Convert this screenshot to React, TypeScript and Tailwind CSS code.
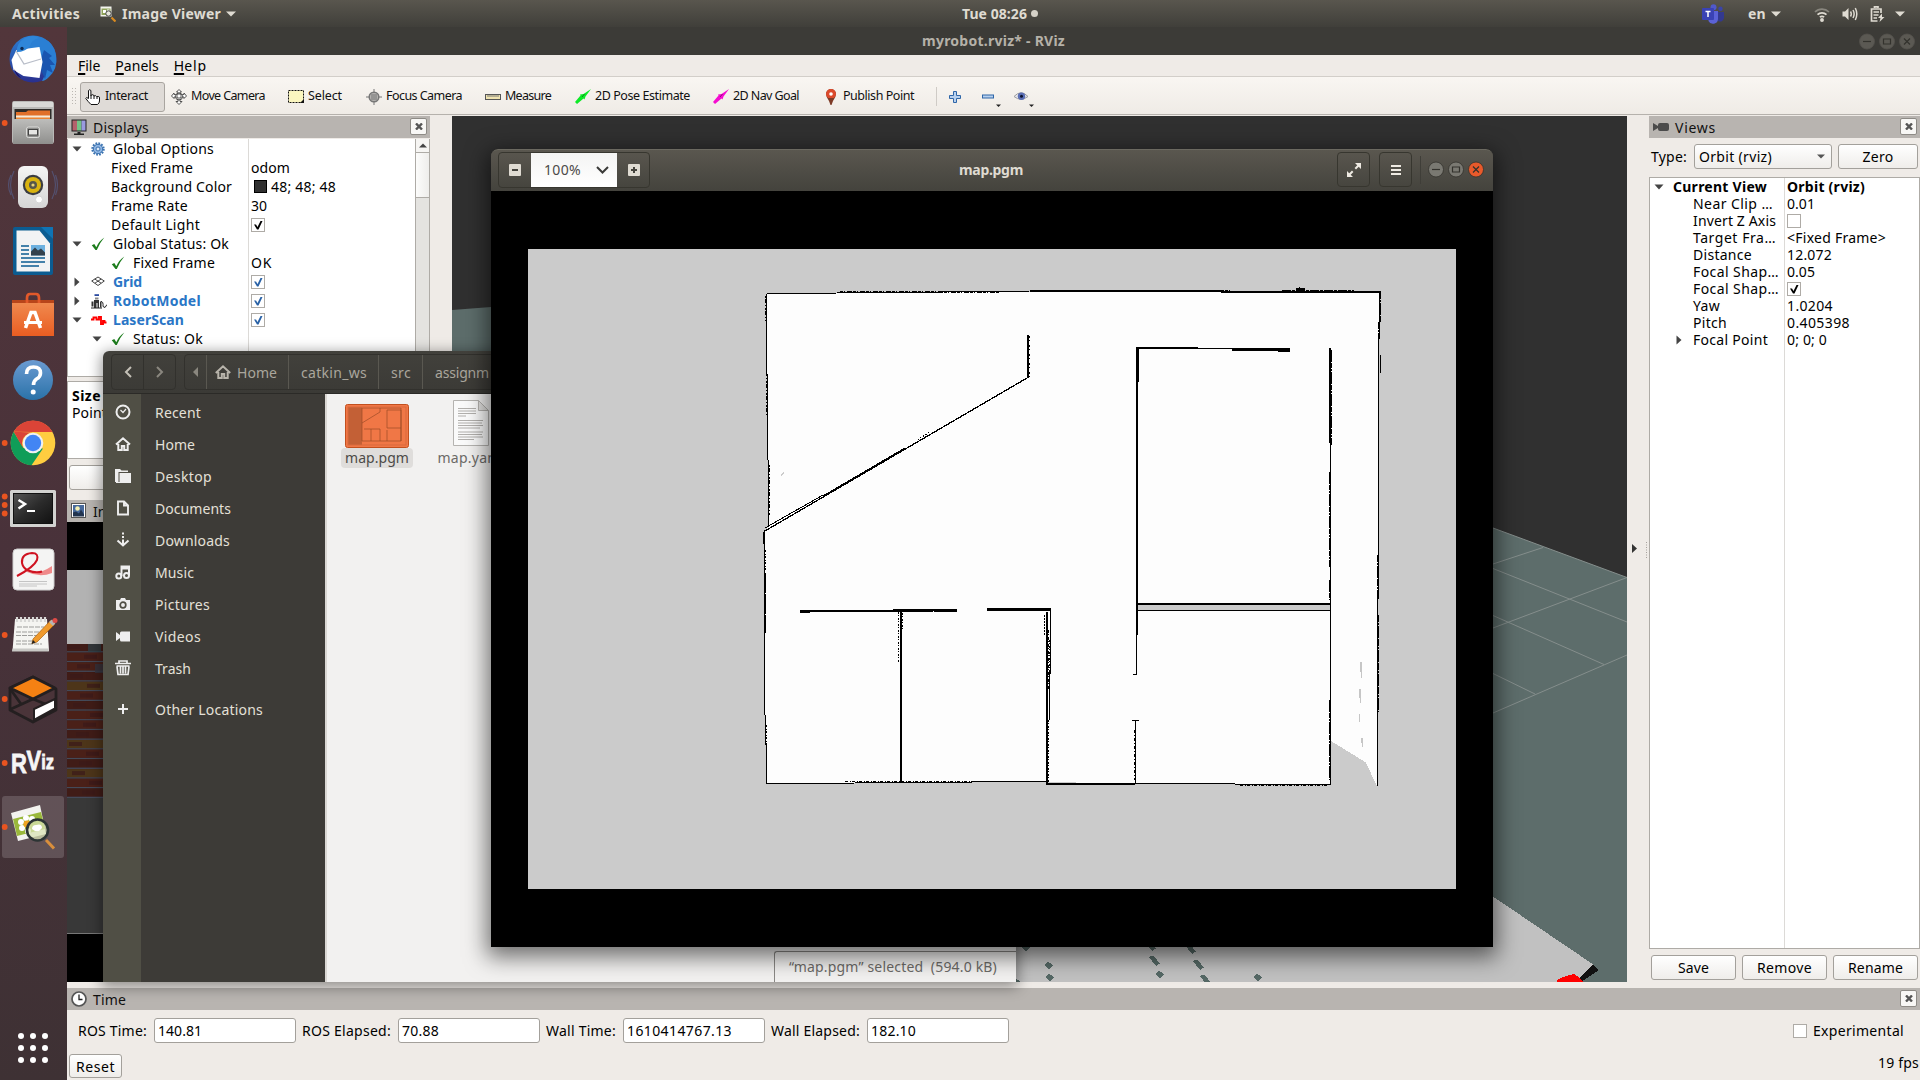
import { useLayoutEffect, useRef, useState, type ReactNode } from "react";

/* Text run whose tracking is tuned so that it spans `w` pixels. */
function T({ children, w, className = "" }: { children: string; w?: number; className?: string }) {
  const ref = useRef<HTMLSpanElement>(null);
  const [spacing, setSpacing] = useState(0);
  useLayoutEffect(() => {
    if (!ref.current || !w) return;
    const natural = ref.current.getBoundingClientRect().width;
    setSpacing((w - natural) / children.length);
  }, []);
  return (
    <span ref={ref} className={`inline-block whitespace-pre ${className}`} style={{ letterSpacing: `${spacing}px` }}>
      {children}
    </span>
  );
}

/* ---------- Top bar ---------- */

function Caret({ className = "" }: { className?: string }) {
  return (
    <svg className={className} width="10" height="6" viewBox="0 0 10 6">
      <path d="M0 0.5h10L5 5.5z" fill="currentColor" />
    </svg>
  );
}

function TopBar() {
  return (
    <header className="flex h-[27px] w-full shrink-0 items-center bg-linear-to-b from-[#59564e] to-[#403f3a] text-[14px] font-bold text-[#dfdbd2]">
      <T w={68} className="ml-3">Activities</T>
      <svg className="ml-5 h-4 w-4" viewBox="0 0 16 16">
        <rect x="0.5" y="0.5" width="11" height="10" fill="#f4f4ee" />
        <rect x="1.5" y="2.5" width="9" height="6.5" fill="#8fa35a" />
        <path d="M3 4h3v3H3zM7 3.5h2.500v2H7z" fill="#fff" />
        <circle cx="8.500" cy="7.500" r="2.700" fill="#e6e6dc" stroke="#444" />
        <path d="M11.500 11.500l4 4" stroke="#d98a1f" strokeWidth="2.200" />
      </svg>
      <T w={99} className="ml-1.5">Image Viewer</T>
      <Caret className="ml-[5px]" />
      <T w={65} className="ml-[726px]">Tue 08:26</T>
      <span className="ml-[4px] h-[7px] w-[7px] rounded-full bg-[#d5d1c8]" />
      <svg className="ml-[664px] h-5 w-[22px]" viewBox="0 0 22 20">
        <circle cx="11.500" cy="3.300" r="3" fill="#5059c9" />
        <circle cx="18.500" cy="4.800" r="2.200" fill="#3b44a8" />
        <path d="M15 8h7v6a4 4 0 0 1-6 3z" fill="#33398f" />
        <path d="M7 7h9v8a5 5 0 0 1-9.500 2z" fill="#5b62d6" />
        <rect x="0" y="4" width="12" height="12" rx="1" fill="#3a42b4" />
        <path d="M3.500 7.500h5M6 7.500v5.500" stroke="#fff" strokeWidth="1.500" />
      </svg>
      <T w={18} className="ml-6">en</T>
      <Caret className="ml-[5px]" />
      <svg className="ml-[33px] h-4 w-4" viewBox="0 0 16 16" fill="none" stroke="#dfdbd2" strokeWidth="1.700">
        <path d="M1 6a10 10 0 0 1 14 0" opacity=".4" />
        <path d="M3.500 8.700a6.500 6.500 0 0 1 9 0" />
        <path d="M5.800 11.200a3.500 3.500 0 0 1 4.400 0" />
        <circle cx="8" cy="14" r="1.100" fill="#dfdbd2" />
      </svg>
      <svg className="ml-3 h-4 w-4" viewBox="0 0 16 16" fill="none" stroke="#dfdbd2" strokeWidth="1.500">
        <path d="M0.500 5.500h2.500l3.500-3.500v12l-3.500-3.500H.5z" fill="#dfdbd2" stroke="none" />
        <path d="M8.500 5.500q1.500 2.500 0 5M11 4q2.300 4 0 8M13.300 2q3 6 0 12" />
      </svg>
      <svg className="ml-3 h-4 w-[15px]" viewBox="0 0 15 16" fill="none" stroke="#dfdbd2" strokeWidth="1.700">
        <path d="M7.500 15H1.500V3h9.500v4M4.500 2V0.800h3.500V2" />
        <path d="M3.500 6h5.500M3.500 9h5M3.500 12h3.500" />
        <path d="M12 7.500l-4 4.500h2.500l-1 4 5-5h-2.500z" fill="#dfdbd2" stroke="none" />
      </svg>
      <Caret className="ml-2.5" />
    </header>
  );
}

/* ---------- Dock ---------- */

const DOCK: { dots: number; art: ReactNode }[] = [
  {
    dots: 0,
    art: (
      <g>
        <circle cx="33" cy="59" r="23.500" fill="url(#tb)" />
        <path d="M22 40q9-7 20-2q12 4 14 17q2 14-7 22q-4 4-7 4q5-8 1-16l-2-10q-8-10-20-6z" fill="#2a7fd4" />
        <path d="M44 50l8 6-3 2 6 7-5 0 3 8-6-3-2 9-6-14z" fill="#1a55b0" />
        <path d="M11.500 60l5-10 23-3 3 15-3 16-16-2-10-6z" fill="#fff" />
        <path d="M16 51l8 13 17-5" fill="none" stroke="#b9bec9" strokeWidth="1.300" />
        <path d="M17 52q-1-9 8-14q8-4 14 0q-8 2-9 8q-5 6-13 6z" fill="#2f86d9" />
        <circle cx="22" cy="48.500" r="1.700" fill="#0f2c55" />
        <path d="M14 69l7 9q-5-2-7-9z" fill="#1d1160" />
      </g>
    ),
  },
  {
    dots: 1,
    art: (
      <g>
        <path d="M14 101h37q3 0 3 3v37q0 3-3 3H15q-3 0-3-3v-37q0-3 2-3z" fill="#b9b9b7" />
        <path d="M13 102h40v5H13z" fill="#d9d9d7" />
        <rect x="14.500" y="109" width="37" height="11" fill="#2e2b28" />
        <path d="M16 112h10l2-1.500h22v9H16z" fill="#e1702a" />
        <path d="M16 115.500h34v4H16z" fill="#f6ead9" />
        <path d="M16 117.500h34v3H16z" fill="#ec8434" />
        <rect x="13" y="119" width="40" height="25" rx="1.500" fill="url(#cab)" />
        <rect x="26.500" y="127" width="13" height="10.500" rx="2" fill="#8f8f8d" stroke="#dcdcda" />
        <rect x="28.500" y="129.500" width="9" height="5.500" fill="#e5e5e3" stroke="#444" />
      </g>
    ),
  },
  {
    dots: 0,
    art: (
      <g>
        <path d="M14 171q-7 14 0 28M11 175q-5 10 0 20M52 171q7 14 0 28M55.500 175q4 10 0 20" fill="none" stroke="#56608a" strokeWidth="1.200" opacity=".65" />
        <rect x="18" y="166" width="30" height="42" rx="6" fill="url(#spk)" />
        <circle cx="33" cy="185" r="10.200" fill="#3b3d42" />
        <circle cx="33" cy="185" r="8" fill="#d9b310" />
        <circle cx="33" cy="185" r="4" fill="#55564a" />
        <circle cx="33" cy="185" r="1.600" fill="#e8d47a" />
        <circle cx="39" cy="199.500" r="3.500" fill="#fff" stroke="#d5d5d5" />
      </g>
    ),
  },
  {
    dots: 0,
    art: (
      <g>
        <path d="M15 227h28l10 12v34q0 2-2 2H15q-2 0-2-2v-44q0-2 2-2z" fill="#0b5c91" />
        <path d="M41 227h12v12z" fill="#0f74b4" />
        <path d="M16.500 230.500h23l10.500 13v28h-33.500z" fill="#f2f3f4" />
        <rect x="31" y="245" width="14" height="10.500" fill="#6db1e0" />
        <path d="M31 255.500v-4l4-4 3 3 3-2 4 4v3z" fill="#33414d" />
        <path d="M21 246h8M21 250h8M21 254h8M21 258h24M21 262h24M21 266h18" stroke="#0b5c91" strokeWidth="1.700" />
      </g>
    ),
  },
  {
    dots: 0,
    art: (
      <g>
        <path d="M12 300h42v4H12z" fill="#b8451a" />
        <path d="M27 306v-8q0-4 3-4h6q3 0 3 4v8" fill="none" stroke="#e2592a" strokeWidth="2.700" />
        <path d="M12 303h42v33H12z" fill="url(#bag)" />
        <path d="M25.500 328L31 312.500h4L40.500 328" fill="none" stroke="#fff" strokeWidth="3.500" />
        <path d="M24 322.500h18" stroke="#fff" strokeWidth="3" />
      </g>
    ),
  },
  {
    dots: 0,
    art: (
      <g>
        <circle cx="33" cy="380" r="20" fill="url(#help)" />
        <path d="M26.500 374q0-7 7-7q7 0 7 6q0 4-4 6q-3 2-3 6" fill="none" stroke="#fff" strokeWidth="3.600" />
        <circle cx="33.200" cy="392" r="2.500" fill="#fff" />
      </g>
    ),
  },
  {
    dots: 1,
    art: (
      <g>
        <circle cx="33" cy="443" r="22.300" fill="#ffcd40" />
        <path d="M13.700 431.800A22.300 22.300 0 0 1 52.500 432H33z" fill="#db4437" />
        <path d="M13.700 431.800A22.300 22.300 0 0 0 31.500 465.300L43 448.500 23.500 448z" fill="#0f9d58" />
        <path d="M13.700 431.800L23.300 448.600A11 11 0 0 1 33 432.500z" fill="#db4437" />
        <circle cx="33" cy="443" r="10.300" fill="#f1f1f1" />
        <circle cx="33" cy="443" r="8.200" fill="#4285f4" />
      </g>
    ),
  },
  {
    dots: 3,
    art: (
      <g>
        <rect x="10" y="490" width="46" height="37" rx="1.500" fill="#d2d2d0" />
        <rect x="13.500" y="493.500" width="39" height="30" fill="url(#term)" stroke="#111" />
        <path d="M18.500 500l6.500 4-6.500 4.500" fill="none" stroke="#fff" strokeWidth="2.500" />
        <path d="M27 511h8" stroke="#fff" strokeWidth="2" />
      </g>
    ),
  },
  {
    dots: 0,
    art: (
      <g>
        <rect x="13" y="549" width="41" height="41" rx="4" fill="#f4f4f3" stroke="#cfcfcf" />
        <path d="M24 570q12 7 28-4v7q-12 5-25-1z" fill="#ef8a8a" />
        <path d="M17 576q17-9 20-16q2-7-5-7q-11 1-10 10q1 5 6 7.500q8 3 14 1" fill="none" stroke="#cf1220" strokeWidth="2" />
        <path d="M19 581.500h28M19 584h28M19 586h18" stroke="#c4c4c4" />
      </g>
    ),
  },
  {
    dots: 1,
    art: (
      <g>
        <path d="M15 619h32l2 32H12.500z" fill="#f5f5f2" />
        <path d="M12.500 648.500h36l.3 3H12z" fill="#c9c9c6" />
        <path d="M17 617v5M21 617v5M25 617v5M29 617v5M33 617v5M37 617v5M41 617v5M45 617v5" stroke="#d8d8d6" strokeWidth="2.200" />
        <path d="M17 627h27M16 632h28M16 635.500h26M16 641h18M16 644h26" stroke="#9d9d9b" strokeDasharray="5 1" />
        <path d="M33 639l18-19 4 4-18 18-5 1.500z" fill="#f09a2c" stroke="#a9620f" strokeWidth=".7" />
        <path d="M49 622l3-2.500 3.500 3.500-2.500 3z" fill="#b5b5b5" />
        <circle cx="55" cy="620.500" r="2.500" fill="#dd4a46" />
        <path d="M31.500 644l1.500-4 2.500 2.500z" fill="#222" />
      </g>
    ),
  },
  {
    dots: 1,
    art: (
      <g strokeLinejoin="round">
        <path d="M33 677L10 688v22l23 12 23-12v-21z" fill="#4a3439" stroke="#241f20" strokeWidth="2.800" />
        <path d="M33 677l22 11-22 11-23-11z" fill="#f58113" stroke="#241f20" strokeWidth="2.800" />
        <path d="M11 709l22-10 22 9M11 690l10 14" fill="none" stroke="#241f20" strokeWidth="2.800" />
        <path d="M34 709l21-10v9.500L34 720z" fill="#fff" stroke="#241f20" strokeWidth="2" />
      </g>
    ),
  },
  {
    dots: 1,
    art: (
      <g className="font-['Liberation_Sans_Narrow','Liberation_Sans',sans-serif] font-bold" fill="#f6f6f6" stroke="#f6f6f6" strokeWidth=".8">
        <text x="11" y="773" fontSize="28" textLength="43" lengthAdjust="spacingAndGlyphs">
          R<tspan dy="-3">V</tspan><tspan fontSize="21" dy="-1">iz</tspan>
        </text>
      </g>
    ),
  },
  {
    dots: 1,
    art: (
      <g>
        <rect x="2" y="796" width="62" height="62" rx="3" fill="#fff" opacity=".16" />
        <path d="M11 813l29-8 6 29-28 7z" fill="#f3f3ef" />
        <path d="M13 819l28-7 4 17-28 7z" fill="#9ab83b" />
        <g fill="#fff">
          <circle cx="26" cy="818" r="3" /><circle cx="21" cy="822" r="3" /><circle cx="22" cy="828" r="3" />
          <circle cx="32" cy="819" r="3" /><circle cx="28" cy="831" r="3" />
        </g>
        <circle cx="27" cy="824" r="3.500" fill="#f0a422" />
        <circle cx="37.500" cy="830" r="10.500" fill="#d8e3b4" fillOpacity=".75" stroke="#2c3434" strokeWidth="2.600" />
        <path d="M32 829q0-4 4-4q6-2 6 3l-3 3h-4z" fill="#fff" />
        <path d="M46 840l8 8.500" stroke="#d98f3c" strokeWidth="3" />
      </g>
    ),
  },
];

const DOT_OFFSETS: Record<number, number[]> = { 0: [], 1: [0], 3: [-10.5, -2, 6.5] };

function Dock() {
  return (
    <aside className="flex h-full w-[67px] shrink-0 flex-col bg-linear-to-b from-[#52363b] via-[#49323a] to-[#3e3134]">
      <svg width="0" height="0">
        <defs>
          <linearGradient id="tb" x1="0" y1="0" x2="0" y2="1"><stop offset="0" stopColor="#2b7fd3" /><stop offset="1" stopColor="#2a2f8e" /></linearGradient>
          <linearGradient id="cab" x1="0" y1="0" x2="0" y2="1"><stop offset="0" stopColor="#bdbdbb" /><stop offset="1" stopColor="#8f8f8d" /></linearGradient>
          <linearGradient id="spk" x1="0" y1="0" x2="0" y2="1"><stop offset="0" stopColor="#f5f5f5" /><stop offset="1" stopColor="#d5d5d5" /></linearGradient>
          <linearGradient id="bag" x1="0" y1="0" x2="0" y2="1"><stop offset="0" stopColor="#f0894e" /><stop offset="1" stopColor="#e95d22" /></linearGradient>
          <linearGradient id="help" x1="0" y1="0" x2="0" y2="1"><stop offset="0" stopColor="#6b9bd2" /><stop offset="1" stopColor="#2a72a8" /></linearGradient>
          <linearGradient id="term" x1="0" y1="0" x2="1" y2="1"><stop offset="0" stopColor="#555" /><stop offset=".5" stopColor="#2b2b2b" /><stop offset="1" stopColor="#111" /></linearGradient>
        </defs>
      </svg>
      {DOCK.map((item, i) => (
        <svg key={i} className="h-16 w-[67px] shrink-0" viewBox={`0 ${27 + 64 * i} 67 64`}>
          {item.art}
          {DOT_OFFSETS[item.dots].map((dy) => (
            <circle key={dy} cx="4.700" cy={59 + 64 * i + dy} r="2.900" fill="#e95420" />
          ))}
        </svg>
      ))}
      <div className="mt-auto mb-[17px] ml-[18px] grid w-[30px] grid-cols-3 gap-1.5">
        {Array.from({ length: 9 }, (_, i) => (
          <span key={i} className="h-1.5 w-1.5 rounded-full bg-white" />
        ))}
      </div>
    </aside>
  );
}

/* ---------- RViz pieces ---------- */

function CloseButton() {
  return (
    <span className="flex h-[17px] w-[17px] items-center justify-center rounded-[2px] border border-[#8e8b86] bg-[#f8f7f5]">
      <svg width="8" height="7" viewBox="0 0 8 7"><path d="M1 0.500l6 6M7 .5l-6 6" stroke="#555" strokeWidth="2.400" /></svg>
    </span>
  );
}

function Check({ checked = true, color = "#000" }: { checked?: boolean; color?: string }) {
  return (
    <svg className="h-3.5 w-3.5 shrink-0" viewBox="0 0 14 14">
      <rect x="0.500" y="0.500" width="13" height="13" fill="#fff" stroke="#aeaba6" />
      {checked && <path d="M3 6.500h2l1.500 2.500 3-6h2L7.500 11.500H6z" fill={color} />}
    </svg>
  );
}

function Expander({ open }: { open: boolean }) {
  return (
    <svg className="h-2.5 w-2.5 shrink-0" viewBox="0 0 10 10">
      <path d={open ? "M0.500 2.500h9L5 7.500z" : "M2.500 0.500v9L7.500 5z"} fill="#444" />
    </svg>
  );
}

const OkIcon = () => (
  <svg className="h-[14px] w-[14px] shrink-0" viewBox="0 0 14 14">
    <path d="M0.800 8.200l2.500-1.200 2 3.200Q8 4 13.300.5 8.500 6 5.800 13H4.500z" fill="#1d7d1d" />
  </svg>
);
const GearIcon = () => (
  <svg className="h-[14px] w-[14px] shrink-0" viewBox="0 0 14 14">
    <circle cx="7" cy="7" r="5.600" fill="none" stroke="#3a72b0" strokeWidth="2.200" strokeDasharray="1.700 1.200" />
    <circle cx="7" cy="7" r="4.700" fill="#8db4e2" stroke="#3a72b0" />
    <circle cx="7" cy="7" r="2" fill="#dce8f6" stroke="#3a72b0" />
  </svg>
);
const GridIcon = () => (
  <svg className="h-[14px] w-[14px] shrink-0" viewBox="0 0 14 14" fill="none" stroke="#444">
    <path d="M7 2l6.300 4L7 10.500.7 6zM3.800 4l6.300 4.200M10.200 4L3.900 8.200" />
  </svg>
);
const RobotIcon = () => (
  <svg className="h-4 w-4 shrink-0" viewBox="0 0 16 16">
    <path d="M3.500 1.200h4.500v1.800H3.500z" fill="#2a49a0" />
    <path d="M4 4.500h3.500v2H4z" fill="#888" />
    <path d="M.5 8.500h2v5h-2zM3 7h5v8H6.500v-5h-1v5H3zM9 8.500h1.500v6H9z" fill="#333" />
    <path d="M0 15h11M10 8.500q2.500 0 2 5l2 1 2-3" fill="none" stroke="#222" />
  </svg>
);
const LaserIcon = () => (
  <svg className="h-4 w-4 shrink-0" viewBox="0 0 16 16">
    <path d="M0 7.500h2.500v-2h3v2h2.500v-2.500h2v7h2v-3h1.500v1.500h2" fill="none" stroke="#f00" strokeWidth="1.900" />
  </svg>
);

type Row = {
  pad: string;
  open?: boolean;
  icon?: ReactNode;
  gap?: string;
  name: string;
  w: number;
  bold?: boolean;
  value?: ReactNode;
};

const blue = "#2a62a6";
const DISPLAY_ROWS: Row[] = [
  { pad: "pl-[4px]", open: true, icon: <GearIcon />, gap: "ml-2", name: "Global Options", w: 101 },
  { pad: "pl-[43px]", name: "Fixed Frame", w: 82, value: <T w={39}>odom</T> },
  {
    pad: "pl-[43px]", name: "Background Color", w: 121,
    value: (
      <>
        <span className="mr-1 ml-[3px] h-[13px] w-[13px] border border-black bg-[#303030]" />
        <T w={65}>48; 48; 48</T>
      </>
    ),
  },
  { pad: "pl-[43px]", name: "Frame Rate", w: 77, value: <T w={16}>30</T> },
  { pad: "pl-[43px]", name: "Default Light", w: 89, value: <Check /> },
  { pad: "pl-[4px]", open: true, icon: <OkIcon />, gap: "ml-2", name: "Global Status: Ok", w: 116 },
  { pad: "pl-[43px]", icon: <OkIcon />, gap: "ml-2", name: "Fixed Frame", w: 82, value: <T w={21}>OK</T> },
  { pad: "pl-[4px]", open: false, icon: <GridIcon />, gap: "ml-2", name: "Grid", w: 29, bold: true, value: <Check color={blue} /> },
  { pad: "pl-[4px]", open: false, icon: <RobotIcon />, gap: "ml-1.5", name: "RobotModel", w: 88, bold: true, value: <Check color={blue} /> },
  { pad: "pl-[4px]", open: true, icon: <LaserIcon />, gap: "ml-1.5", name: "LaserScan", w: 71, bold: true, value: <Check color={blue} /> },
  { pad: "pl-[24px]", open: true, icon: <OkIcon />, gap: "ml-2", name: "Status: Ok", w: 70 },
];

function PanelHeader({ icon, title, w }: { icon: ReactNode; title: string; w: number }) {
  return (
    <div className="flex h-[22px] shrink-0 items-center bg-[#b8b4b0] pr-[3px] pb-px pl-1 text-[14px] text-[#111]">
      <span className="flex w-[22px]">{icon}</span>
      <T w={w} className="mt-0.5">{title}</T>
      <span className="ml-auto"><CloseButton /></span>
    </div>
  );
}

function DisplaysPanel() {
  return (
    <section className="flex h-full w-[363px] shrink-0 flex-col">
      <PanelHeader
        title="Displays"
        w={56}
        icon={
          <svg className="h-4 w-4" viewBox="0 0 16 16">
            <rect x="0.500" y="0.500" width="15" height="12" fill="#222" />
            <path d="M1.500 1.500h4.500v10H1.500z" fill="#b5606c" />
            <path d="M6 1.500h4.500v10H6z" fill="#74c287" />
            <path d="M10.500 1.500h4v10h-4z" fill="#9a9ae0" />
            <path d="M6.500 13h3v1.500H13V16H3v-1.500h3.500z" fill="#222" />
          </svg>
        }
      />
      <div className="mt-px flex h-[238px] shrink-0 border border-t-0 border-[#aeaba6] bg-white text-[14px] text-black">
        <div className="flex min-w-0 grow flex-col">
          {DISPLAY_ROWS.map((r, i) => (
            <div key={i} className="flex h-[19px] shrink-0">
              <div className={`flex w-[181px] items-center border-r border-[#dcdad7] ${r.pad}`}>
                {r.open !== undefined && <span className="mr-[9px] flex"><Expander open={r.open} /></span>}
                {r.icon}
                <T w={r.w} className={`${r.gap ?? ""} ${r.bold ? "font-bold text-[#2a76c6]" : ""}`}>{r.name}</T>
              </div>
              <div className="flex items-center pl-[2px]">{r.value}</div>
            </div>
          ))}
          <div className="w-[181px] grow border-r border-[#dcdad7]" />
        </div>
        <div className="flex w-[14px] flex-col border-l border-[#aeaba6] bg-[#e4e3e0]">
          <span className="flex h-[14px] items-center justify-center border-b border-[#aeaba6] bg-[#f6f5f3]">
            <svg width="8" height="5" viewBox="0 0 8 5"><path d="M0 4.500h8L4 .5z" fill="#444" /></svg>
          </span>
          <span className="h-[45px] border-b border-[#aeaba6] bg-linear-to-r from-[#fcfcfb] to-[#eeedeb]" />
        </div>
      </div>
      <div className="mt-1 flex h-[78px] shrink-0 flex-col items-start border border-[#aeaba6] bg-white pt-[5px] pl-1 text-[14px] leading-[17px] text-black">
        <T w={29} className="font-bold">Size</T>
        <T w={35}>Point</T>
      </div>
      <div className="flex h-[37px] shrink-0 items-center px-[2px] text-[14px]">
        <span className="flex h-[25px] w-[84px] items-center justify-center rounded-[3px] border border-[#a3a09b] bg-linear-to-b from-white to-[#efedea] pl-3 text-black">
          <T w={25}>Add</T>
        </span>
      </div>
      <div className="h-1 shrink-0" />
      <PanelHeader
        title="Image"
        w={42}
        icon={
          <svg className="h-[15px] w-[15px]" viewBox="0 0 15 15">
            <rect x="0.500" y="0.500" width="14" height="14" fill="#fff" stroke="#555" />
            <rect x="2" y="2" width="11" height="11" fill="#47699b" />
            <circle cx="6.500" cy="5.500" r="2.300" fill="#f3efb4" />
            <path d="M2 9.500l3-1 3 2 2-4 3 5v2H2z" fill="#22344f" />
          </svg>
        }
      />
      <div className="h-[48px] shrink-0 bg-black" />
      <div className="h-[74px] shrink-0 bg-[#b2b2b2]" />
      <svg className="h-[154px] w-full shrink-0" viewBox="0 0 363 154" preserveAspectRatio="none">
        <rect width="363" height="154" fill="#3b1d18" />
        {Array.from({ length: 16 }, (_, i) => (
          <g key={i}>
            <rect y={i * 9.7 - 1} width="363" height="8.200" fill={i === 13 || i === 10 || i === 4 ? "#4d3519" : i % 3 === 0 ? "#401c17" : "#4a2018"} />
            <rect y={i * 9.7 + 7.2} width="363" height="1.300" fill="#444a59" />
            <rect x={(i * 17) % 24} y={i * 9.7 + 1} width="13" height="4" fill="#3a1a1a" opacity=".7" />
          </g>
        ))}
        <rect x="21" y="0" width="13" height="8" fill="#2c4248" opacity=".7" />
        <rect x="28" y="20" width="12" height="9" fill="#33333f" opacity=".8" />
      </svg>
      <div className="h-[136px] shrink-0 border-b border-[#777] bg-[#383838]" />
      <div className="grow bg-black" />
    </section>
  );
}

function RenderView() {
  return (
    <svg className="h-full w-[1175px] shrink-0" viewBox="452 116 1175 866">
      <rect x="452" y="116" width="1175" height="866" fill="#303030" />
      <path d="M452 310L491 307 1000 345 1493 528 1627 577.500V982H452z" fill="#5d6d6b" />
      <path d="M1493 528L1627 577.500M1493 564L1543 547.500M1493 568.500L1627 622M1493 628L1627 577.500M1493 615.500L1604 664.500M1493 713L1627 655M1493 673.500L1535 694" stroke="#858e8c" strokeWidth="1" fill="none" />
      <g shapeRendering="crispEdges">
        <path d="M1000 800H1350L1493 896.500 1594 965 1582 982H1000z" fill="#c1c1c1" />
        <path d="M1593 965l6 5-18 12h-6z" fill="#111" />
        <path d="M1557 982v-2l6-3 6-2 5-1 5 3 4 5z" fill="#f00" />
        <g fill="#566966">
          {[[1026, 947], [1049, 965], [1050, 977], [1160, 974], [1258, 977], [1017, 982]].map(([x, y]) => (
            <path key={`${x}-${y}`} d={`M${x - 4} ${y - 1}l3-2 2 1 3 3-4 3-4-3z`} />
          ))}
          {[[1150, 946], [1154, 961], [1190, 949], [1198, 965], [1205, 980]].map(([x, y]) => (
            <path key={`${x}-${y}`} d={`M${x - 5} ${y - 4}l4-1.500 7 8-4 2.500z`} />
          ))}
        </g>
      </g>
    </svg>
  );
}

const VIEW_ROWS: Row[] = [
  { pad: "pl-[4px]", open: true, name: "Current View", w: 94, bold: true, value: <T w={78} className="font-bold">Orbit (rviz)</T> },
  { pad: "pl-[43px]", name: "Near Clip …", w: 80, value: <T w={28}>0.01</T> },
  { pad: "pl-[43px]", name: "Invert Z Axis", w: 83, value: <Check checked={false} /> },
  { pad: "pl-[43px]", name: "Target Fra…", w: 83, value: <T w={99}>{"<Fixed Frame>"}</T> },
  { pad: "pl-[43px]", name: "Distance", w: 59, value: <T w={45}>12.072</T> },
  { pad: "pl-[43px]", name: "Focal Shap…", w: 86, value: <T w={28}>0.05</T> },
  { pad: "pl-[43px]", name: "Focal Shap…", w: 86, value: <Check /> },
  { pad: "pl-[43px]", name: "Yaw", w: 27, value: <T w={46}>1.0204</T> },
  { pad: "pl-[43px]", name: "Pitch", w: 34, value: <T w={63}>0.405398</T> },
  { pad: "pl-[24px]", open: false, name: "Focal Point", w: 75, value: <T w={40}>0; 0; 0</T> },
];

function ViewsPanel() {
  return (
    <section className="flex h-full w-[271px] shrink-0 flex-col text-[14px] text-black">
      <PanelHeader
        title="Views"
        w={41}
        icon={
          <svg className="h-4 w-[17px]" viewBox="0 0 17 16">
            <path d="M0 4l5 3V6q0-2 2-2h7q2 0 2 2v4q0 2-2 2H7q-2 0-2-2V9l-5 3z" fill="#4b4b4b" />
          </svg>
        }
      />
      <div className="mt-1.5 flex h-[25px] shrink-0 items-center pl-0.5">
        <T w={36}>Type:</T>
        <div className="ml-[7px] flex h-[25px] w-[138px] items-center justify-between rounded-[3px] border border-[#a3a09b] bg-linear-to-b from-white to-[#efedea] pr-1.5 pl-1">
          <T w={73}>Orbit (rviz)</T>
          <svg width="8" height="5" viewBox="0 0 8 5"><path d="M0 .5h8L4 4.500z" fill="#555" /></svg>
        </div>
        <div className="ml-1.5 flex h-[25px] w-20 items-center justify-center rounded-[3px] border border-[#a3a09b] bg-linear-to-b from-white to-[#efedea]">
          <T w={31}>Zero</T>
        </div>
      </div>
      <div className="mt-2 flex h-[772px] shrink-0 flex-col border border-[#aeaba6] bg-white">
        {VIEW_ROWS.map((r, i) => (
          <div key={i} className="flex h-[17px] shrink-0">
            <div className={`flex w-[135px] items-center border-r border-[#dcdad7] ${r.pad}`}>
              {r.open !== undefined && <span className="mr-[9px] flex"><Expander open={r.open} /></span>}
              <T w={r.w} className={r.bold ? "font-bold" : ""}>{r.name}</T>
            </div>
            <div className="flex items-center pl-[2px]">{r.value}</div>
          </div>
        ))}
        <div className="w-[135px] grow border-r border-[#dcdad7]" />
      </div>
      <div className="mt-1.5 flex gap-1.5 px-0.5">
        {([["Save", 31], ["Remove", 55], ["Rename", 55]] as [string, number][]).map(([label, w]) => (
          <div key={label} className="flex h-[25px] w-[85px] items-center justify-center rounded-[3px] border border-[#a3a09b] bg-linear-to-b from-white to-[#efedea]">
            <T w={w}>{label}</T>
          </div>
        ))}
      </div>
    </section>
  );
}

function Tool({ icon, label, w, gap }: { icon: ReactNode; label: string; w: number; gap: string }) {
  return (
    <div className={`flex items-center ${gap}`}>
      <span className="mr-1 flex w-4 justify-center">{icon}</span>
      <T w={w}>{label}</T>
    </div>
  );
}

function ArrowTool({ color }: { color: string }) {
  return (
    <svg className="h-4 w-4" viewBox="0 0 16 16">
      <path d="M0 13l5.500-6.500-.5-1 3.500-.5L16 0 10.500 7.500 9.500 10.500 8.500 9.500 2 15z" fill={color} />
      <path d="M7 8l2.500-3" stroke="#0006" />
    </svg>
  );
}

function Toolbar() {
  return (
    <div className="flex h-[39px] shrink-0 items-center border-t border-b border-t-[#d2cec9] border-b-[#b5b1ac] bg-linear-to-b from-[#f9f6f2] to-[#efebe6] pt-0.5 text-[12.500px] text-[#111]">
      <svg className="ml-[5px] h-[18px] w-1" viewBox="0 0 4 18">
        <path d="M.5 0v18M3.500 0v18" stroke="#bbb7b2" strokeDasharray="1 2" />
      </svg>
      <div className="ml-1 flex h-[30px] w-[85px] items-center rounded-[3px] border border-[#a9a5a0] bg-[#dfdbd7]">
        <svg className="mr-1 ml-1 h-4 w-4" viewBox="0 0 16 16">
          <path d="M3.500 9.500V1.500q1.200-1.500 2.400 0V7q0-1.500 2-1.300 1 .2 1 1.300 2-1 2.800.7 1.500-.8 2.800.5V12q0 2-2 3.500H6Q3 12.500.8 9.500 1 7.500 3.500 9.500z" fill="#fff" stroke="#111" />
          <path d="M6 7v3M9 7v3M12 8v2" stroke="#111" />
        </svg>
        <T w={43}>Interact</T>
      </div>
      <Tool
        gap="ml-1.5" w={74} label="Move Camera"
        icon={
          <svg className="h-4 w-4" viewBox="0 0 16 16" fill="#fff" stroke="#444" strokeWidth=".9">
            <path d="M8 0.500l2.500 2.500H9v3l4-.5V4l2.500 3L13 9.500V8L9 8v4.500h2L8 15.500 5 12.500h2V8L3 8v1.500L.5 7 3 4v1.500L7 6V3H5.500z" />
            <circle cx="8" cy="7.500" r="3.500" fill="none" />
          </svg>
        }
      />
      <Tool
        gap="ml-[23px]" w={34} label="Select"
        icon={
          <svg className="h-[13px] w-4" viewBox="0 0 16 13">
            <rect x="0.500" y="0.500" width="15" height="12" fill="#fbf6c0" stroke="#111" strokeDasharray="2 1" />
            <path d="M16 9v4h-4z" fill="#111" />
          </svg>
        }
      />
      <Tool
        gap="ml-6" w={76} label="Focus Camera"
        icon={
          <svg className="h-4 w-4" viewBox="0 0 16 16" fill="none" stroke="#777">
            <circle cx="8" cy="8" r="4.800" strokeWidth="1.500" />
            <path d="M8 0v16M0 8h16M3.500 6h9M3.500 10h9M6 3.500v9M10 3.500v9" />
          </svg>
        }
      />
      <Tool
        gap="ml-[23px]" w={46} label="Measure"
        icon={
          <svg className="h-1.5 w-4" viewBox="0 0 16 6">
            <rect x="0.500" y="0.500" width="15" height="5" fill="#efe3b0" stroke="#555" />
            <path d="M3 1v2M5 1v2M7 1v2M9 1v2M11 1v2M13 1v2" stroke="#777" />
          </svg>
        }
      />
      <Tool gap="ml-6" w={95} label="2D Pose Estimate" icon={<ArrowTool color="#0dea27" />} />
      <Tool gap="ml-[23px]" w={66} label="2D Nav Goal" icon={<ArrowTool color="#f50cd0" />} />
      <Tool
        gap="ml-6" w={71} label="Publish Point"
        icon={
          <svg className="h-4 w-3" viewBox="0 0 12 16">
            <path d="M1 5a5 5 0 0 1 10 0q0 3-3 7l-1.500 4h-1L4 12Q1 8 1 5z" fill="#7d3a26" />
            <path d="M1 5a5 5 0 0 1 10 0q0 2-2 4H3Q1 7 1 5z" fill="#dc4a2c" />
            <circle cx="6" cy="5" r="1.800" fill="#fff" />
          </svg>
        }
      />
      <span className="ml-[22px] h-[19px] w-px bg-[#cfcbc6]" />
      <svg className="ml-3 h-3 w-3" viewBox="0 0 12 12">
        <path d="M4.500.5h3v4h4v3h-4v4h-3v-4h-4v-3h4z" fill="#b7d0ee" stroke="#2f66a8" />
      </svg>
      <svg className="ml-5 h-[21px] w-5" viewBox="0 0 20 21">
        <rect x="1.500" y="9" width="11" height="3" fill="#b7d0ee" stroke="#2f66a8" />
        <path d="M15 18.500h5l-2.500 2.500z" fill="#222" />
      </svg>
      <svg className="ml-[13px] h-[21px] w-5" viewBox="0 0 20 21">
        <path d="M0 10.500Q7 3 14 10.500 7 16 0 10.500z" fill="#e8e8ec" stroke="#9a9a9e" />
        <circle cx="7.500" cy="10.300" r="3.700" fill="#5a6eb4" />
        <circle cx="7.500" cy="10.300" r="1.500" fill="#0c1330" />
        <path d="M15 18.500h5l-2.500 2.500z" fill="#222" />
      </svg>
    </div>
  );
}

function WindowButton({ kind, active }: { kind: "min" | "max" | "close"; active?: boolean }) {
  const fill = !active ? "#5b5953" : kind === "close" ? "#e95a2b" : "#7a7972";
  const glyph = { min: "M4 8h8", max: "M4.500 5.500h7v5h-7z", close: "M5 5l6 6M11 5l-6 6" }[kind];
  return (
    <svg className="h-[17px] w-4" viewBox="0 0 16 16">
      <circle cx="8" cy="8" r="7.500" fill={fill} stroke={active ? "#33322d" : "#54524c"} strokeWidth=".8" />
      <path d={glyph} fill="none" stroke="#33322d" strokeWidth="1.200" />
    </svg>
  );
}

function TimePanel() {
  const fields: [string, number, string, number][] = [
    ["ROS Time:", 69, "140.81", 44],
    ["ROS Elapsed:", 89, "70.88", 37],
    ["Wall Time:", 70, "1610414767.13", 105],
    ["Wall Elapsed:", 89, "182.10", 45],
  ];
  return (
    <section className="mt-1.5 flex h-[92px] shrink-0 flex-col text-[14px] text-black">
      <PanelHeader
        title="Time"
        w={33}
        icon={
          <svg className="h-4 w-4" viewBox="0 0 16 16">
            <circle cx="8" cy="8" r="7" fill="#fff" stroke="#555" strokeWidth="1.700" />
            <path d="M8 3.500V8.500h3.500" fill="none" stroke="#222" strokeWidth="1.300" />
          </svg>
        }
      />
      <div className="mt-2 flex items-center pl-[11px]">
        {fields.map(([label, w, value, vw]) => (
          <div key={label} className="mr-1.5 flex items-center">
            <T w={w}>{label}</T>
            <span className="ml-[7px] flex h-[25px] w-[142px] items-center rounded-[3px] border border-[#a3a09b] bg-white pl-[3px]">
              <T w={vw}>{value}</T>
            </span>
          </div>
        ))}
        <div className="mr-4 ml-auto flex items-center gap-1.5">
          <Check checked={false} />
          <T w={91}>Experimental</T>
        </div>
      </div>
      <div className="mt-[11px] flex items-center justify-between pr-px pl-0.5">
        <div className="flex h-6 w-[53px] items-center justify-center rounded-[3px] border border-[#a3a09b] bg-linear-to-b from-white to-[#efedea]">
          <T w={39}>Reset</T>
        </div>
        <T w={41} className="-mt-2">19 fps</T>
      </div>
    </section>
  );
}

function RvizWindow() {
  return (
    <main className="flex h-full min-w-0 grow flex-col bg-[#efebe7]">
      <div className="flex h-7 shrink-0 items-center bg-[#3c3b37] text-[14px] font-bold text-[#b5b1a8]">
        <T w={143} className="-mt-px ml-[855px]">myrobot.rviz* - RViz</T>
        <div className="mr-[5px] ml-auto flex gap-1">
          <WindowButton kind="min" />
          <WindowButton kind="max" />
          <WindowButton kind="close" />
        </div>
      </div>
      <nav className="flex h-[21px] shrink-0 items-center gap-[15px] pl-[11px] text-[14px] text-black">
        {([["F", "ile", 24], ["P", "anels", 44], ["H", "elp", 32]] as [string, string, number][]).map(([a, b, w]) => (
          <span key={a} className="flex whitespace-nowrap">
            <span className="underline decoration-2 underline-offset-2">{a}</span>
            <T w={w - 9}>{b}</T>
          </span>
        ))}
      </nav>
      <Toolbar />
      <div className="mt-px flex h-[866px] shrink-0">
        <DisplaysPanel />
        <div className="w-[22px] shrink-0" />
        <RenderView />
        <svg className="h-full w-[22px] shrink-0" viewBox="0 0 22 866">
          <path d="M5 428l5 4.500-5 4.500z" fill="#333" />
          <path d="M19.500 426v17" stroke="#a5a19c" strokeDasharray="1 1.500" />
        </svg>
        <ViewsPanel />
      </div>
      <TimePanel />
    </main>
  );
}

/* ---------- Files window ---------- */

const PLACES: { name: string; w: number; art: ReactNode }[] = [
  { name: "Recent", w: 46, art: <><circle cx="8" cy="8" r="6.500" fill="none" stroke="#eee" strokeWidth="2" /><path d="M5.500 6L8 8.500 11 5" fill="none" stroke="#eee" strokeWidth="1.200" /></> },
  { name: "Home", w: 40, art: <path d="M1 8.500L8 2.300l7 6.200M3.300 8v6h3.500v-4h2.400v4h3.500V8" fill="none" stroke="#eee" strokeWidth="2" /> },
  { name: "Desktop", w: 57, art: <><path d="M0 1h5l1.500 1.500H13V4H3.500v10H0z" fill="#eee" /><path d="M4.500 5H16v10H1V14h3.500z" fill="#eee" /></> },
  { name: "Documents", w: 76, art: <path d="M3 1.500h6l4 4V14.500H3zM9 1.500v4h4" fill="none" stroke="#eee" strokeWidth="1.900" /> },
  { name: "Downloads", w: 75, art: <path d="M8 .5v2M8 4v2M8 7.500v5M2.500 8.500L8 13.500l5.500-5" fill="none" stroke="#eee" strokeWidth="2" /> },
  { name: "Music", w: 39, art: <><path d="M6.500 12V2.500h7.500V11M6.500 4.500H14" fill="none" stroke="#eee" strokeWidth="2" /><circle cx="3.800" cy="12" r="2.500" fill="none" stroke="#eee" strokeWidth="2" /><circle cx="11.500" cy="11.500" r="2.500" fill="none" stroke="#eee" strokeWidth="2" /></> },
  { name: "Pictures", w: 55, art: <><path d="M1 4h4l1-2h4l1 2h4v10H1z" fill="#eee" /><circle cx="8" cy="9" r="2.800" fill="none" stroke="#504f45" strokeWidth="1.700" /></> },
  { name: "Videos", w: 46, art: <path d="M1 4l4 3V5q0-1.500 1.500-1.500H15v10H6.500Q5 13.500 5 12v-2l-4 3z" fill="#eee" /> },
  { name: "Trash", w: 36, art: <path d="M0 3.500h16M4 3V1h8v2M1.500 6h13M2 6.500l1 8h10l1-8M5.500 6.500v7M8 6.500v7M10.500 6.500v7" fill="none" stroke="#eee" strokeWidth="1.700" /> },
];

function FilesWindow() {
  return (
    <div className="absolute top-[351px] left-[103px] flex h-[631px] w-[913px] flex-col rounded-t-[6px] shadow-[0_3px_14px_2px_rgba(0,0,0,0.4)]">
      <div className="flex h-[43px] shrink-0 items-center rounded-t-[6px] border-b border-[#2b2a27] bg-linear-to-b from-[#42413c] to-[#3b3a36] pl-2 text-[14px] text-[#aaa69d]">
        <div className="flex h-9 w-[65px] rounded-[4px] border border-[#32312d]">
          <span className="flex w-8 items-center justify-center border-r border-[#32312d]">
            <svg width="8" height="12" viewBox="0 0 8 12"><path d="M7 1L2 6l5 5" fill="none" stroke="#c4c0b7" strokeWidth="2" /></svg>
          </span>
          <span className="flex grow items-center justify-center">
            <svg width="8" height="12" viewBox="0 0 8 12"><path d="M1 1l5 5-5 5" fill="none" stroke="#8a877f" strokeWidth="2" /></svg>
          </span>
        </div>
        <div className="ml-2 flex h-9 grow rounded-[4px] border border-[#32312d]">
          <span className="flex w-[22px] items-center justify-center border-r border-[#5a5851]">
            <svg width="5" height="10" viewBox="0 0 5 10"><path d="M5 0v10L0 5z" fill="#8a877f" /></svg>
          </span>
          <span className="flex w-[82px] items-center gap-1.5 border-r border-[#5a5851] pl-2">
            <svg className="h-4 w-4" viewBox="0 0 16 16"><path d="M.8 9L8 2.300 15.200 9M3.300 8v6h3.500v-4h2.400v4h3.500V8" fill="none" stroke="#b8b4ab" strokeWidth="2" /></svg>
            <T w={40}>Home</T>
          </span>
          <span className="flex w-[90px] items-center border-r border-[#5a5851] pl-3"><T w={66}>catkin_ws</T></span>
          <span className="flex w-11 items-center border-r border-[#5a5851] pl-3"><T w={20}>src</T></span>
          <span className="flex items-center pl-3"><T w={54}>assignm</T></span>
        </div>
      </div>
      <div className="flex min-h-0 grow">
        <div className="flex w-[222px] shrink-0 flex-col bg-[linear-gradient(to_right,#504f45_38px,#3d3b37_38px)] pt-[2px] text-[14px] text-[#e4e0d8]">
          {PLACES.map((p) => (
            <div key={p.name} className="flex h-8 shrink-0 items-center pl-3">
              <svg className="mr-6 h-4 w-4" viewBox="0 0 16 16">{p.art}</svg>
              <T w={p.w}>{p.name}</T>
            </div>
          ))}
          <div className="mt-[9px] flex h-8 shrink-0 items-center pl-3">
            <svg className="mr-6 h-4 w-4" viewBox="0 0 16 16"><path d="M8 3v10M3 8h10" stroke="#eee" strokeWidth="2" /></svg>
            <T w={108}>Other Locations</T>
          </div>
        </div>
        <div className="flex grow flex-col border-l-2 border-[#dad7d3] bg-[#f2f1f0]">
          <div className="flex pt-1.5 pl-[14px] text-[14px] text-[#6c6a67]">
            <div className="flex w-[72px] flex-col items-center pt-1">
              <svg className="h-11 w-16" viewBox="0 0 64 44">
                <rect x="0.500" y="0.500" width="63" height="43" rx="2" fill="#f07746" stroke="#c2501f" />
                <rect x="3" y="3" width="14" height="38" fill="#c36036" />
                <path d="M17 4h39v33H17zM17 19L35 8V4M19 25h16M26 25v12M35 25v12M42 6h14M42 6v18h14M56 6v31M42 26v11" fill="none" stroke="#9c4a27" strokeWidth=".7" />
                <rect x="3" y="3" width="58" height="38" fill="none" stroke="#d96a3c" />
              </svg>
              <span className="flex h-5 w-[72px] items-center justify-center rounded-[4px] bg-[#dfdddb] pb-px text-[#4c4a48]"><T w={64}>map.pgm</T></span>
            </div>
            <div className="ml-[22px] flex w-[72px] flex-col items-center">
              <svg className="h-[46px] w-9" viewBox="0 0 36 46">
                <path d="M.5.500h25l10 10v35H.5z" fill="#fafafa" stroke="#b5b3b0" />
                <path d="M25.500.500v10h10z" fill="#e2e1df" stroke="#b5b3b0" />
                <path d="M5 8.500h18M5 11h18M5 13.500h18M5 16h8M5 20.500h25M5 23h24M5 25.500h25M5 28h22M5 32h25M5 34.500h24M5 37h25M5 39.500h16" stroke="#a9a7a4" strokeWidth=".9" />
              </svg>
              <span className="flex h-[22px] items-center"><T w={67}>map.yaml</T></span>
            </div>
          </div>
          <div className="mt-auto flex h-[31px] w-[242px] items-center self-end rounded-tl-[3px] border-t border-l border-[#8a8885] bg-[#f2f1f0] pb-0.5 pl-3.5 text-[14px] text-[#6c6a67]">
            <T w={208}>{"“map.pgm” selected  (594.0 kB)"}</T>
          </div>
        </div>
      </div>
    </div>
  );
}

/* ---------- Image viewer ---------- */

function FloorMap() {
  return (
    <svg className="h-[640px] w-[928px]" viewBox="528 249 928 640" shapeRendering="crispEdges">
      <rect x="528" y="249" width="928" height="640" fill="#cbcbcb" />
      <path d="M766 294L1100 291H1380L1379 339 1378.300 373 1377 786.500 1366 762.500 1331 741V784.500L1135 783.500 1046 782 900 782.500 766 784 765 700 764 532 768.500 526.500 767.300 408z" fill="#fdfdfd" />
      <g fill="none" stroke="#000">
        <path d="M766.500 293.500H778L896 292.500 1030 291H1160" strokeWidth="1" />
        <path d="M1030 290.500H1160L1250 292H1381" strokeWidth="2" />
        <path d="M840 291.500H1000M1160 290.500H1230" strokeWidth="2" strokeDasharray="3 1 1 2 5 1" />
        <path d="M1282 290.500h72M1296 289h10" strokeWidth="1.500" strokeDasharray="9 1 3 1" />
        <path d="M1299 287.500h1M1297 288.500h5" />
        <path d="M766.500 294V335L767.500 410V450L768.500 470V527" />
        <path d="M765.500 296v25M766.500 345v70M769.500 465v50" strokeDasharray="2 1 4 2 1 2" />
        <path d="M764.500 531V700L766.500 760V784" />
        <path d="M764 532v12" strokeWidth="2" />
        <path d="M765.500 573v60" strokeDasharray="20 1" />
        <path d="M765.500 550v20M764.500 640v50M766.500 725v60" strokeDasharray="2 2 1 1" />
        <path d="M764 531.500L1027 378" strokeWidth="1.300" />
        <path d="M765 528L823 495" />
        <path d="M823 496.500L905 448.500" strokeWidth="2" />
        <path d="M918 439.500L932 430.500" strokeDasharray="1 2" />
        <path d="M1027.500 335V378" strokeWidth="2" />
        <path d="M1029.500 335.500v42" strokeDasharray="2 2 1 4" />
        <path d="M800 611.500L957 610" strokeWidth="2.200" />
        <path d="M880 610.500H957" strokeWidth="2" strokeDasharray="30 1 22 1" />
        <path d="M987 609.500H1051" strokeWidth="2.600" />
        <path d="M900.500 611V672L901 783" strokeWidth="2" />
        <path d="M902.500 613v17M898.500 612v50" strokeDasharray="2 1 1 2" />
        <path d="M1046.500 612V783" strokeWidth="2" />
        <path d="M1044.500 615v20" strokeDasharray="2 1" />
        <path d="M1050.500 609V670L1049.500 675V720" />
        <path d="M1049.500 640v34" strokeWidth="2" strokeDasharray="2 1 1 2" />
        <path d="M1048.500 720v62" strokeDasharray="2 1 1 2" />
        <path d="M1048.500 630v60" strokeDasharray="3 1 1 2" />
        <path d="M766 784L900 782.500 1046 781.500V783.500H1135L1331 784.500" />
        <path d="M1046 783.500h89" strokeWidth="2" />
        <path d="M845 781.500H975M1240 785.500h88" strokeDasharray="3 2 1 1" />
        <path d="M1117 783.500H1200" strokeWidth="1.500" />
        <path d="M1137 348V635" strokeWidth="2" />
        <path d="M1138.500 348v34" />
        <path d="M1136.500 635V675M1133 674.500h4" />
        <path d="M1136 348H1167L1290 349" strokeWidth="1.500" />
        <path d="M1232 349.500H1290" strokeWidth="2" />
        <path d="M1278 350.500H1290" strokeWidth="2" />
        <path d="M1330.500 348V784.500" />
        <path d="M1329.500 348v95" />
        <path d="M1331.500 350v95M1329.500 472v95M1329.500 580v20M1329.500 700v80" strokeDasharray="12 1 5 1 2 1" />
        <path d="M1135.500 720V783.500M1132 720.500h7" />
        <path d="M1134.500 730v50" strokeDasharray="3 2 1 2" />
      </g>
      <rect x="1138" y="604" width="192" height="6" fill="#cbcbcb" />
      <path d="M1138 603.500H1330" stroke="#000" strokeWidth="2" />
      <path d="M1138 610.500H1330" stroke="#000" strokeWidth="1.500" />
      <g fill="none" stroke="#000">
        <path d="M1379.500 292V322L1379 340 1378.500 373V560L1377.500 640V786" />
        <path d="M1380.500 292v30M1378.500 322v20M1377.500 555v60M1378.500 615v97" strokeDasharray="7 1 2 1 12 1" />
        <path d="M1380.500 355v18" />
      </g>
      <path d="M1360 662h2v16h-1v-6h-1zM1359 689h2v14h-1v-5h-1zM1359 714h1v8h-1zM1361 738h2v9h-1v-4h-1z" fill="#c6c6c6" />
      <path d="M781 475.500l3-3" stroke="#ccc" />
    </svg>
  );
}

function ViewerWindow() {
  return (
    <div className="absolute top-[149px] left-[491px] flex h-[798px] w-[1002px] flex-col rounded-t-[7px] bg-black shadow-[0_6px_22px_4px_rgba(0,0,0,0.55)]">
      <div className="flex h-[42px] shrink-0 items-center rounded-t-[7px] border-t border-[#6b6960] bg-linear-to-b from-[#5a574f] to-[#44433d] pb-0.5 pl-[7px] text-[14px] text-[#dfdbd2]">
        <div className="flex h-9 w-[152px] overflow-hidden rounded-[4px] border border-[#37362f]">
          <span className="flex w-8 items-center justify-center">
            <svg width="12" height="12" viewBox="0 0 12 12"><rect width="12" height="12" rx="1" fill="#dfdbd2" /><path d="M3 6h6" stroke="#44433d" strokeWidth="2" /></svg>
          </span>
          <span className="flex w-[86px] items-center justify-between bg-linear-to-b from-[#f4f4f3] to-white pr-2 pl-[13px] text-[#4c4a48]">
            <T w={37}>100%</T>
            <svg width="13" height="8" viewBox="0 0 13 8"><path d="M1 1l5.500 5.500L12 1" fill="none" stroke="#3a3a38" strokeWidth="2" /></svg>
          </span>
          <span className="flex grow items-center justify-center pl-px">
            <svg width="12" height="12" viewBox="0 0 12 12"><rect width="12" height="12" rx="1" fill="#dfdbd2" /><path d="M3 6h6M6 3v6" stroke="#44433d" strokeWidth="2" /></svg>
          </span>
        </div>
        <T w={64} className="ml-[309px] font-bold">map.pgm</T>
        <div className="ml-auto flex h-[35px] w-[33px] items-center justify-center rounded-[4px] border border-[#37362f]">
          <svg width="14" height="14" viewBox="0 0 14 14"><path d="M8 0h6v6zM6 14H0V8z" fill="#eeeae2" /><path d="M12 2L8.300 5.700M2 12l3.700-3.700" stroke="#eeeae2" strokeWidth="2" /></svg>
        </div>
        <div className="ml-[9px] flex h-[35px] w-[33px] items-center justify-center rounded-[4px] border border-[#37362f]">
          <svg width="10" height="10" viewBox="0 0 10 10"><path d="M0 1h10M0 5h10M0 9h10" stroke="#eeeae2" strokeWidth="2" /></svg>
        </div>
        <span className="mr-[7px] ml-2 h-7 w-px bg-[#3f3e38]" />
        <div className="mr-[9px] flex gap-1">
          <WindowButton kind="min" active />
          <WindowButton kind="max" active />
          <WindowButton kind="close" active />
        </div>
      </div>
      <div className="flex grow items-center justify-center">
        <FloorMap />
      </div>
    </div>
  );
}

export default function App() {
  return (
    <div className="relative flex h-[1080px] w-[1920px] flex-col overflow-hidden bg-[#efebe7] font-['Noto_Sans','Open_Sans',sans-serif]">
      <TopBar />
      <div className="flex h-[1053px] shrink-0">
        <Dock />
        <RvizWindow />
      </div>
      <FilesWindow />
      <ViewerWindow />
    </div>
  );
}
